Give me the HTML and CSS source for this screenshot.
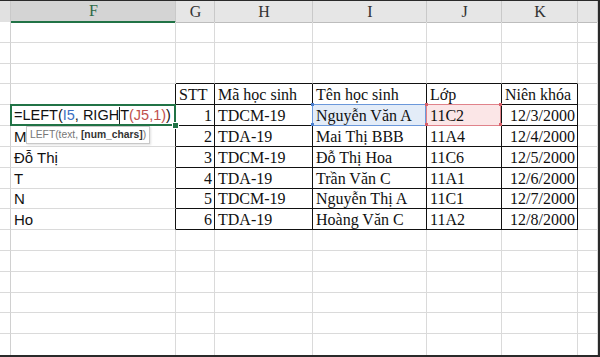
FILE: index.html
```html
<!DOCTYPE html>
<html>
<head>
<meta charset="utf-8">
<link rel="stylesheet" href="styles.css">
</head>
<body>
<div class="sheet">
  <div class="row hdr">
    <div class="c rh"></div><div class="c ch act">F</div><div class="c ch">G</div><div class="c ch">H</div><div class="c ch">I</div><div class="c ch">J</div><div class="c ch">K</div><div class="c ch"></div>
  </div>
  <div class="row"><div class="c rh"></div><div class="c f"></div><div class="c"></div><div class="c"></div><div class="c"></div><div class="c"></div><div class="c"></div><div class="c"></div></div>
  <div class="row"><div class="c rh"></div><div class="c f"></div><div class="c"></div><div class="c"></div><div class="c"></div><div class="c"></div><div class="c"></div><div class="c"></div></div>
  <div class="row"><div class="c rh"></div><div class="c f"></div><div class="c bt"></div><div class="c bt"></div><div class="c bt"></div><div class="c bt"></div><div class="c bt"></div><div class="c"></div></div>
  <div class="row"><div class="c rh"></div><div class="c f br"></div><div class="c t">STT</div><div class="c t">Mã học sinh</div><div class="c t">Tên học sinh</div><div class="c t">Lớp</div><div class="c t">Niên khóa</div><div class="c"></div></div>
  <div class="row"><div class="c rh"></div><div class="c f br sel"><span class="ftxt">=LEFT(<span class="rb">I5</span>, RIGH<span class="cur"></span>T<span class="rr">(J5,1)</span>)</span><span class="handle"></span><div class="tip">LEFT(text, <b>[num_chars]</b>)</div></div><div class="c t num">1</div><div class="c t">TDCM-19</div><div class="c t hl-b">Nguyễn Văn A</div><div class="c t hl-r">11C2</div><div class="c t num">12/3/2000</div><div class="c"></div></div>
  <div class="row"><div class="c rh"></div><div class="c f br">M</div><div class="c t num">2</div><div class="c t">TDA-19</div><div class="c t">Mai Thị BBB</div><div class="c t">11A4</div><div class="c t num">12/4/2000</div><div class="c"></div></div>
  <div class="row"><div class="c rh"></div><div class="c f br">Đỗ Thị</div><div class="c t num">3</div><div class="c t">TDCM-19</div><div class="c t">Đỗ Thị Hoa</div><div class="c t">11C6</div><div class="c t num">12/5/2000</div><div class="c"></div></div>
  <div class="row"><div class="c rh"></div><div class="c f br">T</div><div class="c t num">4</div><div class="c t">TDA-19</div><div class="c t">Trần Văn C</div><div class="c t">11A1</div><div class="c t num">12/6/2000</div><div class="c"></div></div>
  <div class="row"><div class="c rh"></div><div class="c f br">N</div><div class="c t num">5</div><div class="c t">TDCM-19</div><div class="c t">Nguyễn Thị A</div><div class="c t">11C1</div><div class="c t num">12/7/2000</div><div class="c"></div></div>
  <div class="row"><div class="c rh"></div><div class="c f br">Ho</div><div class="c t num">6</div><div class="c t">TDA-19</div><div class="c t">Hoàng Văn C</div><div class="c t">11A2</div><div class="c t num">12/8/2000</div><div class="c"></div></div>
  <div class="row"><div class="c rh"></div><div class="c f"></div><div class="c"></div><div class="c"></div><div class="c"></div><div class="c"></div><div class="c"></div><div class="c"></div></div>
  <div class="row"><div class="c rh"></div><div class="c f"></div><div class="c"></div><div class="c"></div><div class="c"></div><div class="c"></div><div class="c"></div><div class="c"></div></div>
  <div class="row"><div class="c rh"></div><div class="c f"></div><div class="c"></div><div class="c"></div><div class="c"></div><div class="c"></div><div class="c"></div><div class="c"></div></div>
  <div class="row"><div class="c rh"></div><div class="c f"></div><div class="c"></div><div class="c"></div><div class="c"></div><div class="c"></div><div class="c"></div><div class="c"></div></div>
  <div class="row"><div class="c rh"></div><div class="c f"></div><div class="c"></div><div class="c"></div><div class="c"></div><div class="c"></div><div class="c"></div><div class="c"></div></div>
  <div class="row last"><div class="c rh"></div><div class="c f"></div><div class="c"></div><div class="c"></div><div class="c"></div><div class="c"></div><div class="c"></div><div class="c"></div></div>
</div>
</body>
</html>
```
FILE: styles.css
```css
html, body { margin: 0; padding: 0; background: #fff; }
.sheet {
  width: 598px;
  height: 354px;
  border-top: 1px solid #2a2a2a;
  border-right: 2px solid #2a2a2a;
  border-bottom: 2px solid #2a2a2a;
  display: grid;
  grid-template-rows: 21px repeat(16, 1fr);
  overflow: hidden;
  font-family: "Liberation Serif", "Times New Roman", serif;
  font-size: 16px;
  color: #111;
}
.row {
  display: grid;
  grid-template-columns: 11px 165px 39px 98px 114px 75px 76px 20px;
  min-height: 0;
}
.c {
  box-sizing: border-box;
  border-right: 1px solid #dadada;
  border-bottom: 1px solid #dadada;
  padding: 0 2px 0 3px;
  white-space: nowrap;
  display: flex;
  align-items: flex-end;
  line-height: 19px;
  min-width: 0;
  position: relative;
}
.row.last .c { border-bottom: none; }
.rh { background: #fff; border-right: 1px solid #d0d0d0; padding: 0; }
.hdr .c {
  background: #e6e6e6;
  border-right: 1px solid #c9c9c9;
  border-bottom: 1px solid #bdbdbd;
  justify-content: center;
  align-items: center;
  color: #333;
  font-size: 16px;
  line-height: 20px;
}
.hdr .rh { background: #e1e1e1; }
.hdr .ch.act {
  background: #d4d4d4;
  color: #2e6a47;
  border-bottom: 2px solid #217346;
}
.f {
  font-family: "Liberation Sans", Arial, sans-serif;
  font-size: 15px;
  padding-left: 3px;
  padding-right: 0;
  overflow: visible;
}
.bt { border-bottom-color: #111; }
.br { border-right-color: #111; }
.t { border-right-color: #111; border-bottom-color: #111; }
.num { justify-content: flex-end; padding-right: 2px; }
.sel { z-index: 3; }
.sel::after {
  content: "";
  position: absolute;
  left: -1px; top: -1px; right: -1px; bottom: -1px;
  border: 2px solid #217346;
  pointer-events: none;
}
.handle {
  position: absolute;
  right: -4px; bottom: -4px;
  width: 5px; height: 5px;
  background: #217346;
  border: 1px solid #fff;
  z-index: 4;
}
.ftxt { position: relative; z-index: 2; flex-shrink: 0; font-size: 14.5px; }
.rb { color: #3c6fc2; }
.rr { color: #c0504d; }
.cur {
  display: inline-block;
  width: 1px;
  height: 17px;
  background: #222;
  vertical-align: -4px;
}
.tip {
  position: absolute;
  left: 15px;
  top: 21px;
  height: 18px;
  box-sizing: border-box;
  padding: 0 3px;
  background: #fff;
  border: 1px solid #c8c8c8;
  font-family: "Liberation Sans", Arial, sans-serif;
  font-size: 10.3px;
  line-height: 16px;
  color: #777;
  white-space: nowrap;
  box-shadow: 1px 1px 2px rgba(0,0,0,0.12);
  z-index: 5;
}
.tip b { color: #333; }
.hl-b { background: #e3ecf8; }
.hl-b::after {
  content: "";
  position: absolute;
  left: -1px; top: -1px; right: 0; bottom: -1px;
  border: 1px solid #6b98da;
}
.hl-b::before {
  content: "";
  position: absolute;
  left: -2px; top: -2px;
  width: 3px; height: 3px;
  background: #4a7fd0;
  box-shadow: 0 20px 0 #4a7fd0;
  z-index: 2;
}
.hl-r { background: #fbe6e7; }
.hl-r::after {
  content: "";
  position: absolute;
  left: -1px; top: -1px; right: 0; bottom: -1px;
  border: 1px solid #e0828a;
}
.hl-r::before {
  content: "";
  position: absolute;
  left: -2px; top: -2px;
  width: 3px; height: 3px;
  background: #d8606a;
  box-shadow: 74px 0 0 #d8606a, 0 20px 0 #d8606a, 74px 20px 0 #d8606a;
  z-index: 2;
}
```
